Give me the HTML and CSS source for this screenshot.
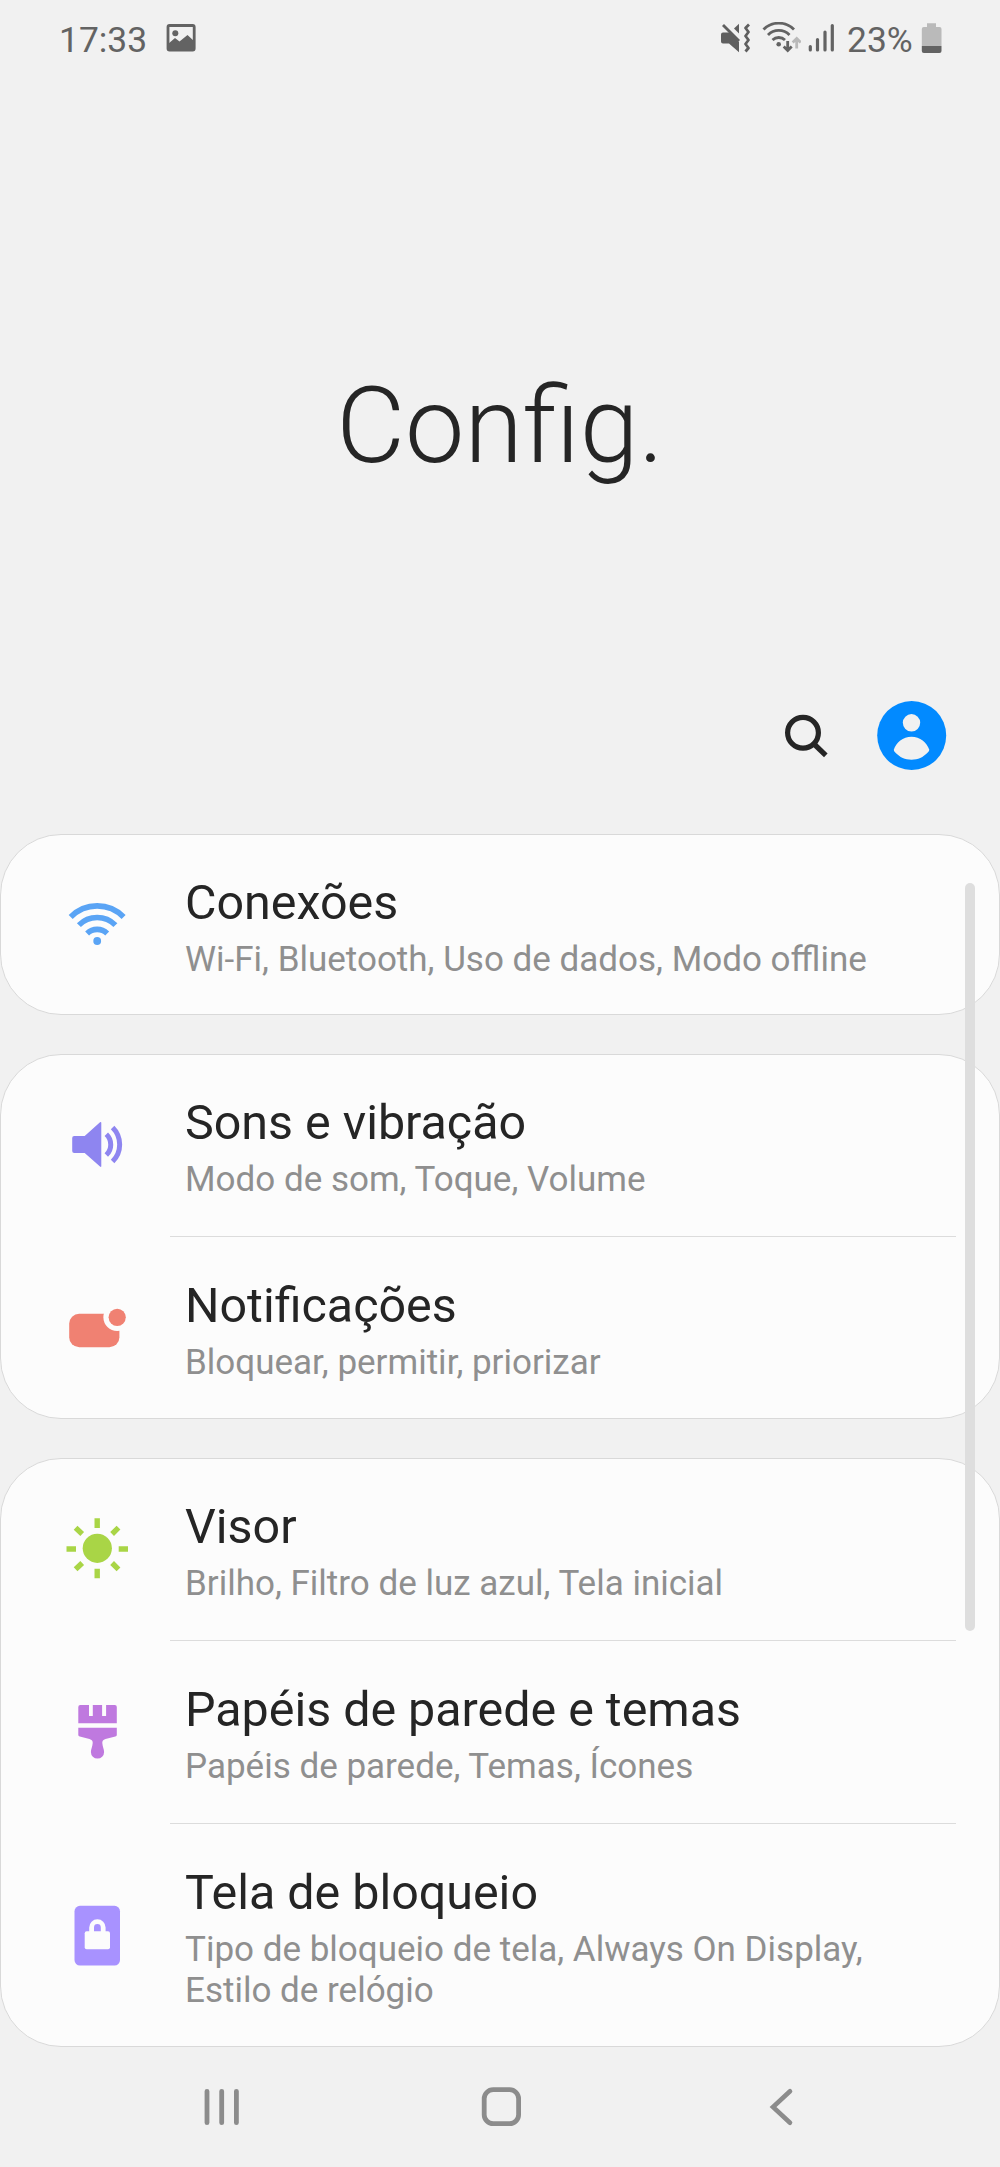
FILE: index.html
```html
<!DOCTYPE html>
<html lang="pt-BR">
<head>
<meta charset="utf-8">
<meta name="viewport" content="width=device-width">
<title>Config.</title>
<link rel="stylesheet" href="styles.css">
</head>
<body>
<div class="screen">
  <header class="status">
    <span class="clock">17:33</span>
    <svg class="picture" viewBox="166 24 30 28" width="30" height="28">
      <rect x="168" y="25.5" width="26.2" height="24.6" rx="1.5" fill="none" stroke="#636363" stroke-width="2.8"/>
      <circle cx="175.3" cy="33.2" r="3" fill="#636363"/>
      <path d="M168 44l7-6 4.5 3.500 8-6.500 7 6.500v8.500h-26.500z" fill="#636363"/>
    </svg>
    <div class="indicators">
      <svg viewBox="720 22 32 32" width="32" height="32">
        <path d="M721 34.500q0-2 2-2h6.500L739 42v10.200l-10-8.700h-6q-2 0-2-2z" fill="#5f5f5f"/>
        <path d="M723 25l16 16" stroke="#5f5f5f" stroke-width="2.800"/>
        <path d="M739 23.800v9.700l-5-5z" fill="#5f5f5f"/>
        <path d="M749 24.500l-3.500 3.500 3 4-3 4 3 4-3 4 3 4-3 3.500" fill="none" stroke="#5f5f5f" stroke-width="2.800" stroke-linejoin="round"/>
      </svg>
      <svg class="wifi-status" viewBox="761 22 40 32" width="40" height="32">
        <g fill="none" stroke="#636363" stroke-width="2.800">
          <path d="M763.500 29.500a21.500 21.500 0 0 1 30.500 0"/>
          <path d="M768 35a15 15 0 0 1 21.500 0"/>
          <path d="M772.500 40a9 9 0 0 1 12.500 0"/>
          <path d="M787.700 41v9M783.700 46.500l4 4 4-4"/>
          <path d="M796.700 48.500v-9M792.700 42.500l4-4 4 4" stroke="#b9b9b9"/>
        </g>
        <circle cx="778.700" cy="44.200" r="2.300" fill="#636363"/>
      </svg>
      <svg class="signal" viewBox="808 23 27 30" width="27" height="30">
        <path d="M810.300 46.500v3.500M817.500 39.500v10.500M825 32v18M832.300 25.500v24.500" stroke="#636363" stroke-width="3.200" stroke-linecap="round"/>
      </svg>
      <span class="percent">23%</span>
      <svg class="battery" viewBox="921 22 22 32" width="22" height="32">
        <path d="M927 23.300h9v3.700h3.500q2 0 2 2v17h-19.700V29q0-2 2-2h3.200z" fill="#bababa"/>
        <path d="M921.800 46h19.700v5q0 2-2 2h-15.700q-2 0-2-2z" fill="#636363"/>
      </svg>
    </div>
  </header>

  <h1 class="heading">Config.</h1>

  <div class="actions">
    <svg viewBox="780 710 50 50" width="50" height="50">
      <circle cx="803" cy="732.800" r="15.400" fill="none" stroke="#252525" stroke-width="5.200"/>
      <path d="M813.500 743.500l12.300 11.800" stroke="#252525" stroke-width="5.200"/>
    </svg>
    <svg viewBox="876 700 72 72" width="72" height="72">
      <circle cx="911.700" cy="735.500" r="34.500" fill="#028aff"/>
      <circle cx="911.500" cy="722.800" r="8.700" fill="#f1f1f1"/>
      <path d="M893.800 749.800C896 742.500 903 736.700 911.500 736.700S927 742.500 929.300 749.800Q929.300 751 928 752.300C923 757.500 918 759.700 911.500 759.700S900 757.500 895 752.300Q893.700 751 893.800 749.800Z" fill="#f1f1f1"/>
    </svg>
  </div>

  <main class="list">
    <section class="card">
      <div class="row">
        <svg class="icon" viewBox="65 893 64 64">
          <g fill="none" stroke="#5aa4f5" stroke-width="5.600">
            <path d="M70.700 917a37 37 0 0 1 52.900 0"/>
            <path d="M78.900 925.100a25.700 25.700 0 0 1 36.500 0"/>
            <path d="M87.100 933.400a14.500 14.500 0 0 1 20.100 0"/>
          </g>
          <circle cx="97.200" cy="941" r="3.900" fill="#5aa4f5"/>
        </svg>
        <div class="text"><h2>Conexões</h2><p>Wi-Fi, Bluetooth, Uso de dados, Modo offline</p></div>
      </div>
    </section>

    <section class="card">
      <div class="row">
        <svg class="icon" viewBox="65 1113 64 64">
          <path d="M72.200 1138q0-2 2-2h10.500L100 1122.300q1.300-.9 1.300.6V1166q0 1.500-1.300.6L84.700 1153H74.200q-2 0-2-2z" fill="#8e85f0"/>
          <path d="M106.300 1134.300a14.300 14.300 0 0 1 0 20.700M112.600 1127.500a24 24 0 0 1 0 34" fill="none" stroke="#8e85f0" stroke-width="5"/>
        </svg>
        <div class="text"><h2>Sons e vibração</h2><p>Modo de som, Toque, Volume</p></div>
      </div>
      <div class="row">
        <svg class="icon" viewBox="65 1296 64 64">
          <rect x="69.200" y="1313.700" width="50.200" height="33.500" rx="10" fill="#f08172"/>
          <circle cx="117.200" cy="1317.300" r="13.800" fill="#fcfcfc"/>
          <circle cx="117.200" cy="1317.300" r="8.600" fill="#f08172"/>
        </svg>
        <div class="text"><h2>Notificações</h2><p>Bloquear, permitir, priorizar</p></div>
      </div>
    </section>

    <section class="card">
      <div class="row">
        <svg class="icon" viewBox="65 1517 64 64">
          <circle cx="97.300" cy="1548.300" r="14.600" fill="#a9d546"/>
          <path d="M97.200 1518.300v9.700M97.200 1568.800v9.400M66.500 1549h9.500M118.700 1549h9.300M75.600 1527.700l6.600 6.300M118.500 1527.700l-6.400 6.300M75.600 1569.300l6.600-6.300M118.500 1569.300l-6.400-6.300" fill="none" stroke="#a9d546" stroke-width="5.400"/>
        </svg>
        <div class="text"><h2>Visor</h2><p>Brilho, Filtro de luz azul, Tela inicial</p></div>
      </div>
      <div class="row">
        <svg class="icon" viewBox="65 1700 64 64">
          <path d="M80.300 1705H89v11h3.800v-11h9.300v11h4v-11h8.700q2 0 2 2v16.300H78.300V1707q0-2 2-2z" fill="#bf79df"/>
          <path d="M78.300 1727.700h38.500v7.300q0 1-1.500 1.500l-9.800 2.500q-3.500 1-3.200 4c.3 4 1.800 6.500 1.800 9a6.600 6.600 0 0 1-13.200 0c0-2.500 1.500-5 1.800-9q.3-3-3.200-4l-9.700-2.500q-1.500-.5-1.500-1.500z" fill="#bf79df"/>
        </svg>
        <div class="text"><h2>Papéis de parede e temas</h2><p>Papéis de parede, Temas, Ícones</p></div>
      </div>
      <div class="row">
        <svg class="icon" viewBox="65 1903.5 64 64">
          <rect x="74.500" y="1905.300" width="45.500" height="59.700" rx="5.500" fill="#a892ff"/>
          <rect x="84.700" y="1930.700" width="25.300" height="18" rx="2" fill="#fcfcfc"/>
          <path d="M91.600 1932v-5a5.800 5.800 0 0 1 11.600 0v5" fill="none" stroke="#fcfcfc" stroke-width="4.800"/>
        </svg>
        <div class="text"><h2>Tela de bloqueio</h2><p>Tipo de bloqueio de tela, Always On Display, Estilo de relógio</p></div>
      </div>
    </section>
  </main>

  <nav class="navbar">
    <svg viewBox="201 2086 42 42" width="42" height="42"><path d="M207 2091.300v31.400M221.700 2091.300v31.400M236.400 2091.300v31.400" stroke="#8c8c8c" stroke-width="4.800" stroke-linecap="round"/></svg>
    <svg viewBox="481 2086 42 42" width="42" height="42"><rect x="484.200" y="2089.700" width="34.400" height="34" rx="9" fill="none" stroke="#8c8c8c" stroke-width="4.800"/></svg>
    <svg viewBox="761 2086 42 42" width="42" height="42"><path d="M790 2091.200l-17 15.800 17 15.800" fill="none" stroke="#8c8c8c" stroke-width="4.600" stroke-linecap="round"/></svg>
  </nav>
  <div class="scrollbar"></div>
</div>
</body>
</html>
```
FILE: styles.css
```css
* { box-sizing: border-box; }
body { margin: 0; background: #f1f1f1; font-family: Roboto, "Liberation Sans", sans-serif; color: #252525; }
h1, h2, p { margin: 0; font-weight: 400; }
svg { display: block; flex: none; }

.screen { position: relative; width: 1000px; height: 2167px; display: flex; flex-direction: column; overflow: hidden; }
.screen > * { flex: none; }

.status { height: 76px; padding: 0 57px 0 59px; display: flex; align-items: center; color: #636363; font-size: 35.4px; line-height: 42px; }
.clock { width: 107px; padding-top: 3px; }
.indicators { margin-left: auto; display: flex; align-items: center; }
.wifi-status { margin-left: 9px; }
.signal { margin-left: 7px; }
.percent { width: 73px; margin-left: 12px; padding-top: 3px; white-space: nowrap; }
.battery { margin-left: 1px; }

.heading { height: 624px; padding-top: 287px; text-align: center; font-size: 106px; line-height: 127px; font-weight: 300; }

.actions { height: 134px; padding-right: 52px; display: flex; justify-content: flex-end; align-items: flex-start; gap: 46px; }
.actions svg:first-child { margin-top: 10px; }

.list { display: flex; flex-direction: column; gap: 39px; }
.card { background: #fcfcfc; border: 1px solid #d9d9d9; border-radius: 61px; }
.row { position: relative; display: flex; align-items: center; padding: 39px 100px 36px 64px; }
.row + .row { padding-top: 41px; }
.row + .row::before { content: ""; position: absolute; left: 169px; right: 43px; top: 0; height: 1px; background: #dcdcdc; }
.row:last-child { padding-bottom: 35px; }
.row:only-child { padding-bottom: 34px; }
.icon { width: 64px; height: 64px; margin-bottom: 4px; }
.text { margin-left: 56px; flex: 1; }
.text h2 { font-size: 48.4px; line-height: 57px; }
.text p { margin-top: 8px; font-size: 35px; line-height: 41px; color: #8f8f8f; }

.navbar { height: 120px; padding: 39px 197px 0 201px; display: flex; justify-content: space-between; }

.scrollbar { position: absolute; left: 965px; top: 883px; width: 10px; height: 748px; border-radius: 5px; background: #dedede; }
```
